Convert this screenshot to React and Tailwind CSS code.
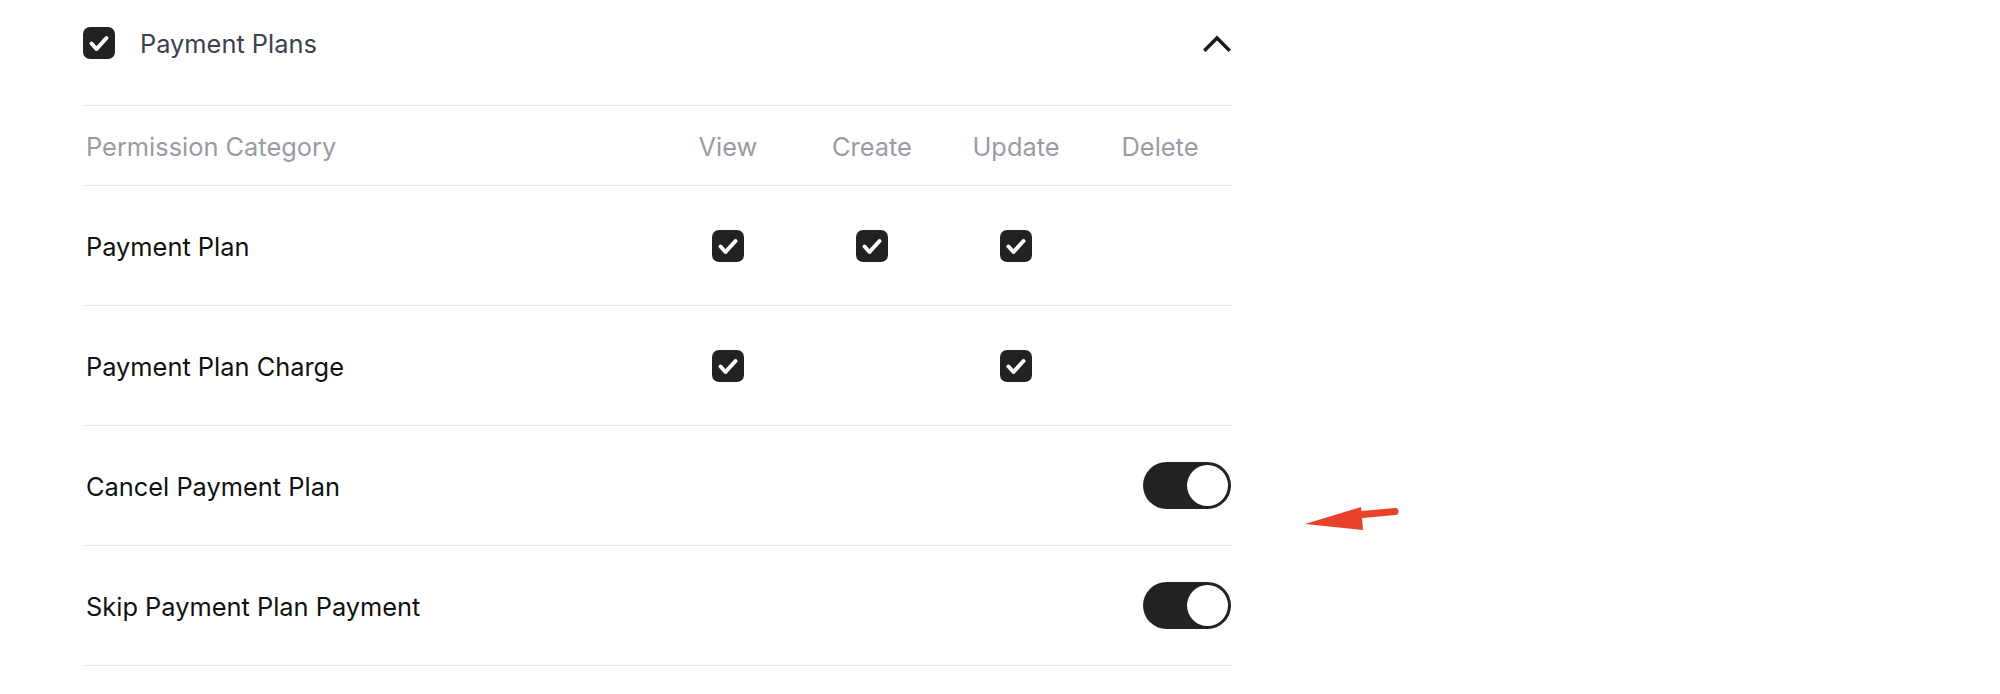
import React from 'react';

const columns = ['View', 'Create', 'Update', 'Delete'];

const rows = [
  { name: 'Payment Plan', type: 'crud', perms: [true, true, true, false] },
  { name: 'Payment Plan Charge', type: 'crud', perms: [true, false, true, false] },
  { name: 'Cancel Payment Plan', type: 'toggle', on: true },
  { name: 'Skip Payment Plan Payment', type: 'toggle', on: true },
];

function Check({ size = 32 }) {
  return (
    <span
      className="inline-flex items-center justify-center rounded-[7px] bg-[#222222]"
      style={{ width: size, height: size }}
    >
      <svg width={size} height={size} viewBox="0 0 32 32" fill="none">
        <path d="M8.5 16.5l5 5.5L23.5 11" stroke="white" strokeWidth="4" strokeLinecap="round" strokeLinejoin="round" />
      </svg>
    </span>
  );
}

function Toggle({ on }) {
  return (
    <span className={`flex h-[47px] w-[88px] items-center rounded-full p-[3px] ${on ? 'justify-end bg-[#222222]' : 'justify-start bg-gray-300'}`}>
      <span className="block h-[41px] w-[41px] rounded-full bg-white" />
    </span>
  );
}

export default function App() {
  return (
    <div className="relative min-h-screen bg-white" style={{ fontFamily: 'Inter, "Noto Sans", sans-serif' }}>
      <div className="w-[1232px] pl-[83px]">
        <div className="flex h-[86px] items-center">
          <Check />
          <span className="ml-[25px] pt-[2px] text-[25.4px] text-[#3a4150]">Payment Plans</span>
          <svg className="ml-auto mr-[1px]" width="28" height="18" viewBox="0 0 28 18" fill="none">
            <path d="M2.5 15.5L14 4l11.5 11.5" stroke="#1a1a1a" strokeWidth="3.4" strokeLinecap="square" />
          </svg>
        </div>

        <div className="mt-[19px] border-t border-[#e8e8ec] pl-px">
          <div className="flex h-[80px] items-center border-b border-[#e8e8ec] pt-[3px] text-[25.4px] text-[#9b9ba6]">
            <div className="flex-1 pl-[2px]">Permission Category</div>
            {columns.map((c) => (
              <div key={c} className="w-[144px] text-center">{c}</div>
            ))}
          </div>

          {rows.map((r) => (
            <div key={r.name} className="flex h-[120px] items-center border-b border-[#e8e8ec] text-[25.4px] text-[#111111]">
              <div className="flex-1 pl-[2px] pt-[3px]">{r.name}</div>
              {r.type === 'crud' ? (
                r.perms.map((p, i) => (
                  <div key={i} className="flex w-[144px] justify-center">
                    {p && <Check />}
                  </div>
                ))
              ) : (
                <div className="flex justify-end pr-px">
                  <Toggle on={r.on} />
                </div>
              )}
            </div>
          ))}
        </div>
      </div>

      <svg className="absolute left-[1300px] top-[500px]" width="104" height="36" viewBox="1300 500 104 36" fill="none">
        <path d="M1362 514.5L1395 511.5" stroke="#e8432a" strokeWidth="7" strokeLinecap="round" />
        <path d="M1305 524L1361 507L1363 530Z" fill="#e8432a" />
      </svg>
    </div>
  );
}
